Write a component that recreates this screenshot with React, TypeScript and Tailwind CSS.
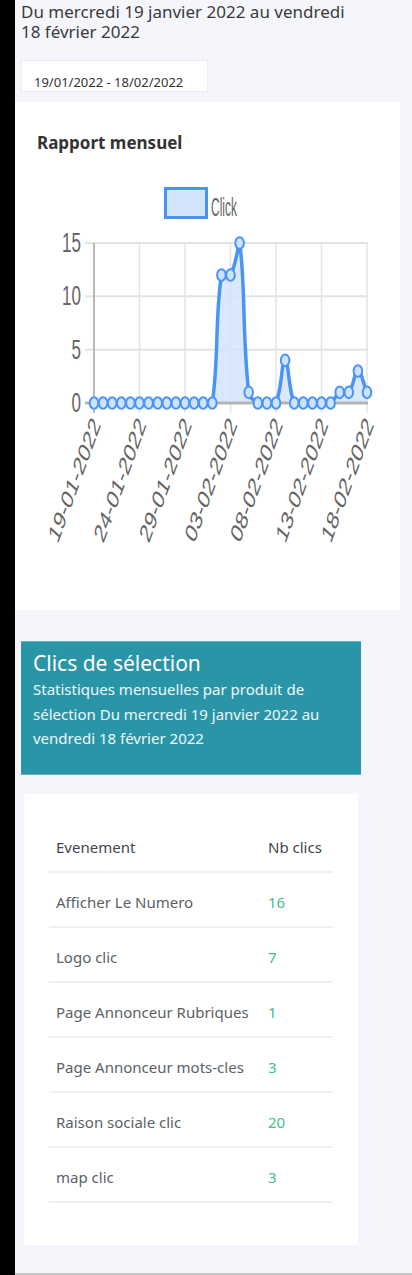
import React from 'react'

const values = [0, 0, 0, 0, 0, 0, 0, 0, 0, 0, 0, 0, 0, 0, 12, 12, 15, 1, 0, 0, 0, 4, 0, 0, 0, 0, 0, 1, 1, 3, 1]
const dates = ['19-01-2022', '24-01-2022', '29-01-2022', '03-02-2022', '08-02-2022', '13-02-2022', '18-02-2022']

const rows = [
    { name: 'Afficher Le Numero', clicks: 16 },
    { name: 'Logo clic', clicks: 7 },
    { name: 'Page Annonceur Rubriques', clicks: 1 },
    { name: 'Page Annonceur mots-cles', clicks: 3 },
    { name: 'Raison sociale clic', clicks: 20 },
    { name: 'map clic', clicks: 3 },
]

// plot area, in svg coordinates
const X0 = 79
const X1 = 352
const Y0 = 223
const YTOP = 63
const step = (X1 - X0) / (values.length - 1)
const unit = (Y0 - YTOP) / 15
const BLUE = '#4a95f3'

const pts = values.map((v, i) => ({ x: X0 + i * step, y: Y0 - v * unit }))

// chart.js style spline, tension 0.4
const buildPath = () => {
    const t = 0.4
    const cps = pts.map((cur, i) => {
        const prev = pts[i - 1] || cur
        const next = pts[i + 1] || cur
        const d01 = Math.hypot(cur.x - prev.x, cur.y - prev.y)
        const d12 = Math.hypot(next.x - cur.x, next.y - cur.y)
        let s01 = d01 / (d01 + d12)
        let s12 = d12 / (d01 + d12)
        if (isNaN(s01)) s01 = 0
        if (isNaN(s12)) s12 = 0
        const fa = t * s01
        const fb = t * s12
        const clamp = (y: number) => Math.min(Y0, Math.max(YTOP, y))
        return {
            prev: { x: cur.x - fa * (next.x - prev.x), y: clamp(cur.y - fa * (next.y - prev.y)) },
            next: { x: cur.x + fb * (next.x - prev.x), y: clamp(cur.y + fb * (next.y - prev.y)) },
        }
    })
    let d = `M${pts[0].x},${pts[0].y}`
    for (let i = 1; i < pts.length; i++) {
        const a = cps[i - 1].next
        const b = cps[i].prev
        d += ` C${a.x},${a.y} ${b.x},${b.y} ${pts[i].x},${pts[i].y}`
    }
    return d
}

const Chart = () => {
    const line = buildPath()
    const area = `${line} L${X1},${Y0} L${X0},${Y0} Z`
    return (
        <svg width="385" height="400" viewBox="0 0 385 400" className="block" style={{ fontFamily: '"Liberation Sans", Arial, sans-serif' }}>
            {/* legend */}
            <rect x="150.5" y="8.5" width="41" height="29" fill="#d2e4fb" stroke={BLUE} strokeWidth="3" />
            <text x="196" y="36" fontSize="25" fill="#666" textLength="26" lengthAdjust="spacingAndGlyphs">Click</text>

            {/* grid */}
            {[0, 5, 10, 15].map(v => (
                <line key={v} x1="70" x2="353" y1={Y0 - v * unit} y2={Y0 - v * unit} stroke="#e3e3e3" strokeWidth="2" />
            ))}
            {dates.map((_, k) => (
                <line key={k} x1={X0 + k * step * 5} x2={X0 + k * step * 5} y1={YTOP} y2={Y0 + 10} stroke="#e3e3e3" strokeWidth="1.5" />
            ))}
            <line x1={X0} x2={X0} y1={YTOP} y2={Y0 + 10} stroke="#a8a8a8" strokeWidth="1.5" />

            {/* y labels */}
            {[0, 5, 10, 15].map(v => (
                <text key={v} transform={`translate(66 ${Y0 - v * unit + 9}) scale(0.63 1)`} textAnchor="end" fontSize="27" fill="#666">{v}</text>
            ))}

            {/* x labels */}
            {dates.map((d, k) => (
                <text key={d} transform={`translate(${X0 + k * step * 5 + 2} 240) scale(0.63 1) rotate(-60)`} textAnchor="end" dy="0.35em" fontSize="27" fill="#666">{d}</text>
            ))}

            {/* series */}
            <path d={area} fill="#d2e4fb" fillOpacity="0.85" />
            <line x1="70" x2="353" y1={Y0} y2={Y0} stroke="#b5b5b5" strokeWidth="3" />
            <path d={line} fill="none" stroke={BLUE} strokeWidth="3.5" />
            {pts.map((p, i) => (
                <ellipse key={i} cx={p.x} cy={p.y} rx="4.3" ry="5.8" fill="#cfe2fb" stroke={BLUE} strokeWidth="2" />
            ))}
        </svg>
    )
}

export default function App() {
    return (
        <div className="flex h-[1275px] bg-black" style={{ fontFamily: '"Noto Sans", sans-serif' }}>
            <div className="w-[15px] shrink-0 bg-black" />
            <main className="flex-1 h-[1275px] bg-[#f5f6fc] border-b-2 border-[#c8c8c8] text-[#333]">
                <p className="w-[355px] px-[6px] pt-[2px] text-[17px] leading-[20px] text-[#3a3a3a]">
                    Du mercredi 19 janvier 2022 au vendredi 18 février 2022
                </p>

                <div className="mt-[18px] ml-[6px] w-[187px] h-[32px] bg-white border border-[#ececec] pl-[12px] pt-[13px] text-[13px] leading-[16px] text-[#333]">
                    19/01/2022 - 18/02/2022
                </div>

                <section className="mt-[10px] w-[385px] h-[508px] bg-white">
                    <h2 className="pt-[29px] pl-[22px] text-[17px] leading-[24px] font-bold text-[#333]">Rapport mensuel</h2>
                    <div className="mt-[25px]">
                        <Chart />
                    </div>
                </section>

                <section className="mt-[31px] ml-[6px] w-[340px] h-[134px] bg-[#2b95a8] border-y border-[#5fb4c3] px-[12px] pt-[7px] text-white">
                    <h3 className="text-[21px] leading-[28px]">Clics de sélection</h3>
                    <p className="text-[15px] leading-[24.5px] text-[#eef7f9]">
                        Statistiques mensuelles par produit de sélection Du mercredi 19 janvier 2022 au vendredi 18 février 2022
                    </p>
                </section>

                <section className="mt-[19px] ml-[9px] w-[334px] h-[451px] bg-white px-[25px] pt-[30px]">
                    <table className="w-[284px] text-[15px] border-collapse">
                        <thead>
                            <tr className="h-[48px] border-b-2 border-[#f0f0f0] text-[#3f4650]">
                                <th className="w-[212px] pl-[7px] text-left font-normal">Evenement</th>
                                <th className="pl-[7px] text-left font-normal">Nb clics</th>
                            </tr>
                        </thead>
                        <tbody>
                            {rows.map(r => (
                                <tr key={r.name} className="h-[55px] border-b-2 border-[#f0f0f0]">
                                    <td className="pl-[7px] pt-[6px] text-[#5b6168] whitespace-nowrap">{r.name}</td>
                                    <td className="pl-[7px] pt-[6px] text-[#44c08c]">{r.clicks}</td>
                                </tr>
                            ))}
                        </tbody>
                    </table>
                </section>
            </main>
        </div>
    )
}
